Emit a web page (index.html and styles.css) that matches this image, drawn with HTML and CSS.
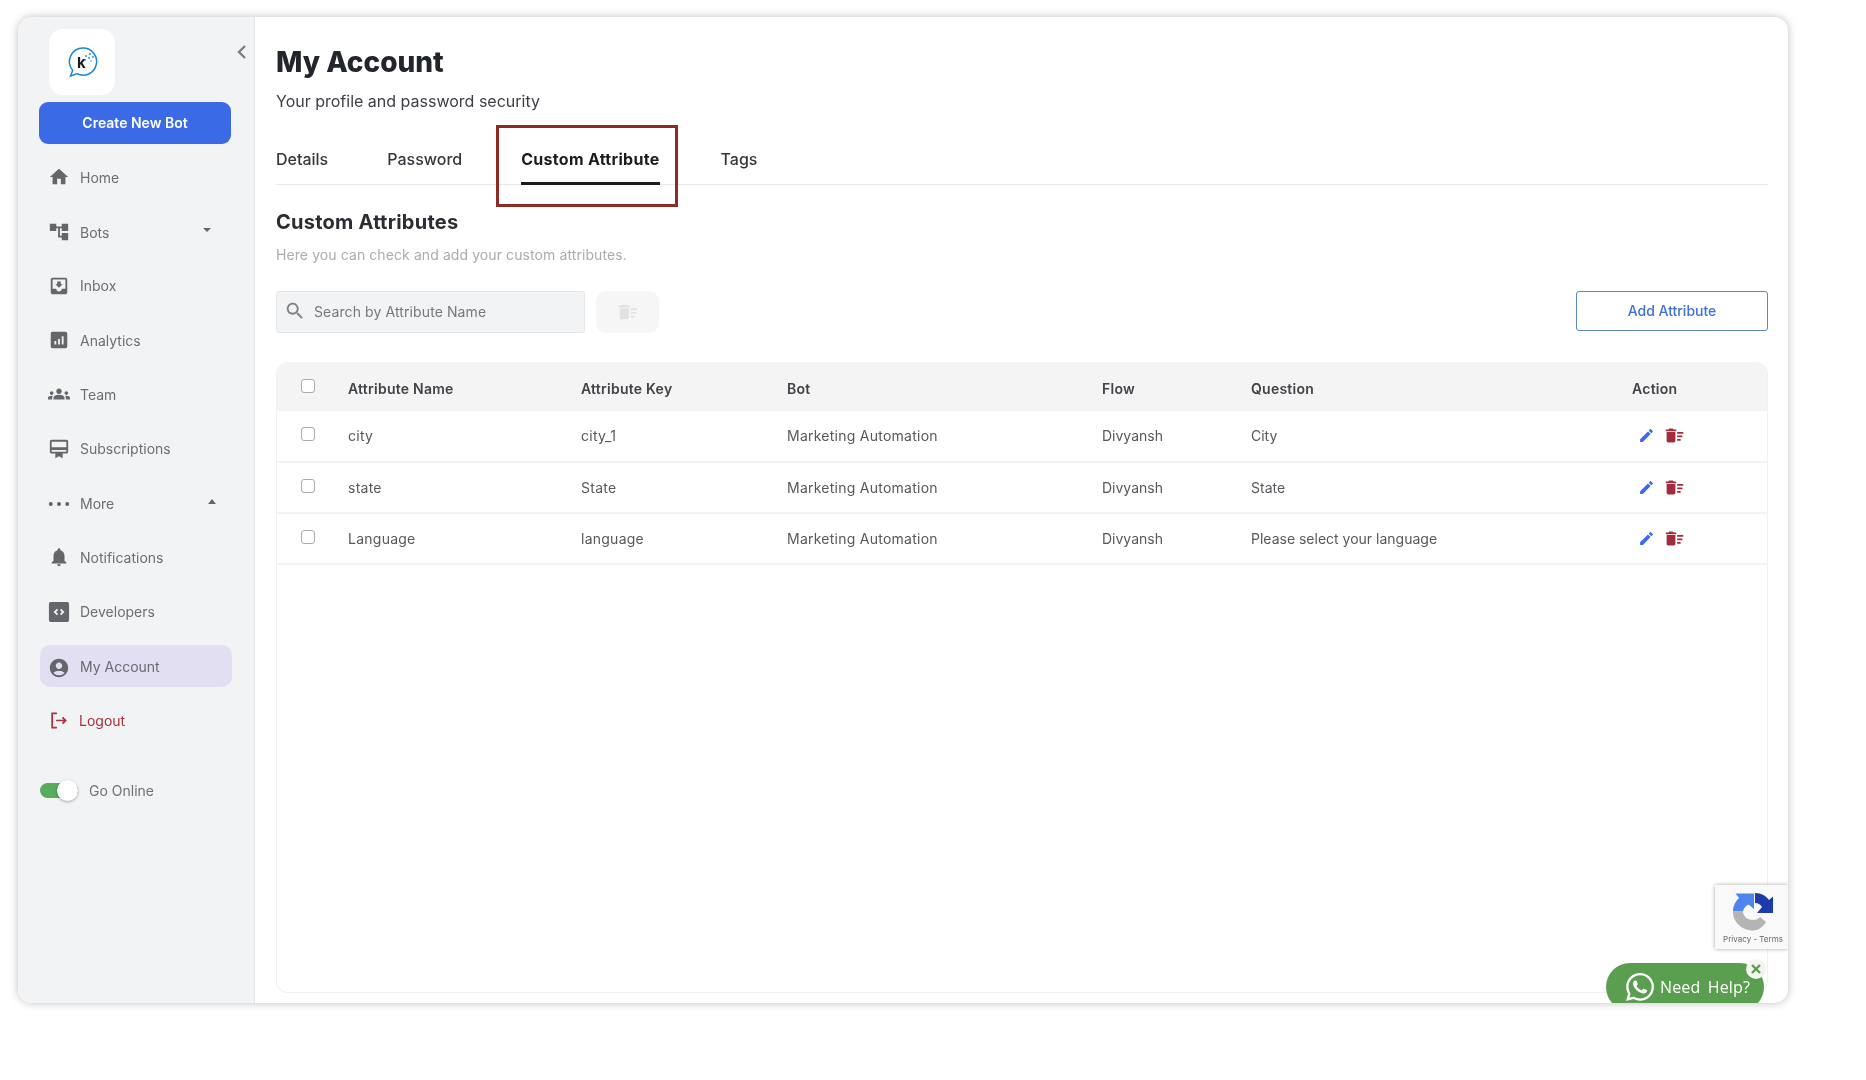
FILE: index.html
```html
<!DOCTYPE html>
<html lang="en">
<head>
<meta charset="utf-8">
<title>My Account</title>
<link rel="stylesheet" href="styles.css">
</head>
<body>
<div class="app">
  <aside class="sidebar">
    <div class="logo">
      <svg width="34" height="34" viewBox="0 0 34 34"><path d="M17 3a13.600 13.600 0 1 1-6.200 25.700L4.500 31l2.200-5.600A13.600 13.600 0 0 1 17 3z" fill="none" stroke="#1b87d6" stroke-width="1.500"/><text x="11" y="23" class="logo-k">k</text><g fill="#1b87d6"><circle cx="20" cy="11" r=".9"/><circle cx="24" cy="9" r=".9"/><circle cx="27" cy="12" r=".9"/><circle cx="23" cy="13" r=".9"/><circle cx="19" cy="15" r=".9"/><circle cx="25" cy="16" r=".7"/></g></svg>
    </div>
    <button class="create">Create New Bot</button>
    <nav class="menu">
      <a class="item"><svg class="ic" viewBox="0 0 24 24"><path d="M10 20v-6h4v6h5v-8h3L12 3 2 12h3v8z"/></svg>Home</a>
      <a class="item nudge"><svg class="ic" viewBox="0 0 24 24"><path d="M22 11V3h-7v3H9V3H2v8h7V8h2v10h4v3h7v-8h-7v3h-2V8h2v3z"/></svg>Bots<i class="caret down bots"></i></a>
      <a class="item"><svg class="ic" viewBox="0 0 24 24"><path d="M19 3H5c-1.100 0-2 .9-2 2v14c0 1.100.9 2 2 2h14c1.100 0 2-.9 2-2V5c0-1.100-.9-2-2-2zm0 12h-4c0 1.660-1.340 3-3 3s-3-1.340-3-3H5V5h14v10zm-3-5h-2V7h-4v3H8l4 4 4-4z"/></svg>Inbox</a>
      <a class="item"><svg class="ic" viewBox="0 0 24 24"><path d="M19 3H5c-1.100 0-2 .9-2 2v14c0 1.100.9 2 2 2h14c1.100 0 2-.9 2-2V5c0-1.100-.9-2-2-2zM9 17H7v-4h2v4zm4 0h-2v-6h2v6zm4 0h-2V8h2v9z"/></svg>Analytics</a>
      <a class="item"><svg class="ic" viewBox="0 0 24 24"><path d="M12 12.750c1.630 0 3.070.39 4.240.9 1.080.48 1.760 1.560 1.760 2.730V18H6v-1.610c0-1.180.68-2.260 1.760-2.730 1.170-.52 2.610-.91 4.240-.91zM4 13c1.100 0 2-.9 2-2s-.9-2-2-2-2 .9-2 2 .9 2 2 2zm1.130 1.100c-.37-.06-.74-.1-1.130-.1-.99 0-1.930.21-2.780.58C.48 14.900 0 15.620 0 16.430V18h4.500v-1.610c0-.83.23-1.610.63-2.290zM20 13c1.100 0 2-.9 2-2s-.9-2-2-2-2 .9-2 2 .9 2 2 2zm4 3.430c0-.81-.48-1.530-1.220-1.850-.85-.37-1.790-.58-2.780-.58-.39 0-.76.04-1.130.1.4.68.63 1.460.63 2.290V18H24v-1.570zM12 6c1.660 0 3 1.340 3 3s-1.340 3-3 3-3-1.340-3-3 1.340-3 3-3z"/></svg>Team</a>
      <a class="item"><svg class="ic" viewBox="0 0 24 24"><path d="M20 2H4c-1.110 0-2 .89-2 2v11c0 1.110.89 2 2 2h4v5l4-2 4 2v-5h4c1.110 0 2-.89 2-2V4c0-1.110-.89-2-2-2zm0 13H4v-2h16v2zm0-5H4V4h16v6z"/></svg>Subscriptions</a>
      <a class="item nudge"><svg class="ic" viewBox="0 0 24 24"><circle cx="3" cy="12" r="2.200"/><circle cx="12" cy="12" r="2.200"/><circle cx="21" cy="12" r="2.200"/></svg>More<i class="caret up"></i></a>
      <a class="item"><svg class="ic" viewBox="0 0 24 24"><path d="M12 22c1.100 0 2-.9 2-2h-4c0 1.100.89 2 2 2zm6-6v-5c0-3.070-1.640-5.640-4.500-6.320V4c0-.83-.67-1.500-1.500-1.500s-1.500.67-1.500 1.500v.68C7.630 5.360 6 7.920 6 11v5l-2 2v1h16v-1l-2-2z"/></svg>Notifications</a>
      <a class="item"><svg class="ic" viewBox="0 0 24 24"><path d="M3 1h18a2 2 0 0 1 2 2v18a2 2 0 0 1-2 2H3a2 2 0 0 1-2-2V3a2 2 0 0 1 2-2zm6.600 7.400L6 12l3.600 3.600 1.400-1.400L8.800 12 11 9.800 9.600 8.400zm4.800 0L13 9.800l2.200 2.200-2.200 2.200 1.400 1.400L18 12l-3.600-3.600z" fill-rule="evenodd"/></svg>Developers</a>
      <a class="item active"><svg class="ic acc" viewBox="0 0 24 24"><path d="M12 2C6.480 2 2 6.480 2 12s4.480 10 10 10 10-4.480 10-10S17.520 2 12 2zm0 4c1.930 0 3.500 1.570 3.500 3.500S13.930 13 12 13s-3.500-1.570-3.500-3.500S10.070 6 12 6zm0 14c-2.030 0-4.430-.82-6.140-2.880C7.550 15.800 9.680 15 12 15s4.450.8 6.140 2.120C16.430 19.180 14.030 20 12 20z"/></svg>My Account</a>
      <a class="item logout"><svg class="ic" viewBox="0 0 24 24"><path d="M10 3H4v18h6M9 12h12M17 8l4 4-4 4" fill="none" stroke="#a5323f" stroke-width="2.200"/></svg>Logout</a>
    </nav>
    <div class="online"><span class="toggle"><span class="knob"></span></span>Go Online</div>
  </aside>
  <button class="collapse" aria-label="Collapse"><svg width="10" height="16" viewBox="0 0 10 16"><path d="M8 2 2 8l6 6" fill="none" stroke="#7a7f85" stroke-width="2.400"/></svg></button>
  <main class="main">
    <h1 class="title">My Account</h1>
    <p class="sub">Your profile and password security</p>
    <div class="tabs">
      <a class="tab">Details</a>
      <a class="tab">Password</a>
      <a class="tab on">Custom Attribute</a>
      <a class="tab">Tags</a>
      <span class="highlight"></span>
    </div>
    <h2 class="heading">Custom Attributes</h2>
    <p class="desc">Here you can check and add your custom attributes.</p>
    <div class="toolbar">
      <div class="search"><svg width="22" height="22" viewBox="0 0 24 24"><path fill="#7d8186" d="M15.500 14h-.79l-.28-.27C15.410 12.590 16 11.110 16 9.500 16 5.910 13.090 3 9.500 3S3 5.910 3 9.500 5.910 16 9.500 16c1.610 0 3.090-.59 4.230-1.570l.27.28v.79l5 4.990L20.490 19l-4.990-5zm-6 0C7.010 14 5 11.990 5 9.500S7.010 5 9.500 5 14 7.010 14 9.500 11.990 14 9.500 14z"/></svg><span>Search by Attribute Name</span></div>
      <button class="bulk" aria-label="Delete selected"><svg width="22" height="22" viewBox="0 0 24 24"><path fill="#e2e2e2" d="M15 16h4v2h-4zm0-8h7v2h-7zm0 4h6v2h-6zM3 18c0 1.100.9 2 2 2h6c1.100 0 2-.9 2-2V8H3v10zM14 5h-3l-1-1H6L5 5H2v2h12z"/></svg></button>
      <button class="add">Add Attribute</button>
    </div>
    <div class="tablewrap">
      <table class="grid">
        <colgroup><col class="c1"><col class="c2"><col class="c3"><col class="c4"><col class="c5"><col class="c6"><col class="c7"></colgroup>
        <thead>
          <tr><th class="chk"><span class="box"></span></th><th>Attribute Name</th><th>Attribute Key</th><th>Bot</th><th>Flow</th><th>Question</th><th>Action</th></tr>
        </thead>
        <tbody>
          <tr><td class="chk"><span class="box"></span></td><td>city</td><td>city_1</td><td>Marketing Automation</td><td>Divyansh</td><td>City</td>
            <td class="acts"><svg class="edit" viewBox="0 0 24 24"><path d="M3 17.250V21h3.750L17.810 9.940l-3.750-3.750L3 17.250zM20.710 7.040c.39-.39.39-1.020 0-1.410l-2.340-2.340c-.39-.39-1.020-.39-1.410 0l-1.830 1.830 3.750 3.750 1.830-1.830z"/></svg><svg class="del" viewBox="0 0 24 24"><path d="M15 16h4v2h-4zm0-8h7v2h-7zm0 4h6v2h-6zM3 18c0 1.100.9 2 2 2h6c1.100 0 2-.9 2-2V8H3v10zM14 5h-3l-1-1H6L5 5H2v2h12z"/></svg></td></tr>
          <tr><td class="chk"><span class="box"></span></td><td>state</td><td>State</td><td>Marketing Automation</td><td>Divyansh</td><td>State</td>
            <td class="acts"><svg class="edit" viewBox="0 0 24 24"><path d="M3 17.250V21h3.750L17.810 9.940l-3.750-3.750L3 17.250zM20.710 7.040c.39-.39.39-1.020 0-1.410l-2.340-2.340c-.39-.39-1.020-.39-1.410 0l-1.830 1.830 3.750 3.750 1.830-1.830z"/></svg><svg class="del" viewBox="0 0 24 24"><path d="M15 16h4v2h-4zm0-8h7v2h-7zm0 4h6v2h-6zM3 18c0 1.100.9 2 2 2h6c1.100 0 2-.9 2-2V8H3v10zM14 5h-3l-1-1H6L5 5H2v2h12z"/></svg></td></tr>
          <tr><td class="chk"><span class="box"></span></td><td>Language</td><td>language</td><td>Marketing Automation</td><td>Divyansh</td><td>Please select your language</td>
            <td class="acts"><svg class="edit" viewBox="0 0 24 24"><path d="M3 17.250V21h3.750L17.810 9.940l-3.750-3.750L3 17.250zM20.710 7.040c.39-.39.39-1.020 0-1.410l-2.340-2.340c-.39-.39-1.020-.39-1.410 0l-1.830 1.830 3.750 3.750 1.830-1.830z"/></svg><svg class="del" viewBox="0 0 24 24"><path d="M15 16h4v2h-4zm0-8h7v2h-7zm0 4h6v2h-6zM3 18c0 1.100.9 2 2 2h6c1.100 0 2-.9 2-2V8H3v10zM14 5h-3l-1-1H6L5 5H2v2h12z"/></svg></td></tr>
        </tbody>
      </table>
    </div>
  </main>
  <div class="recaptcha">
    <svg width="40" height="39" viewBox="0 0 40 39"><path fill="#b4b4b4" d="M0 20h10c.5 5 5 8 10 8 3 0 5.500-1.200 7-3l6 5c-3.500 5.500-8 8.500-13 8.500C9 38.500 0 30 0 20z"/><path fill="#4c86ee" d="M0 19.500C0 14 2.500 9.500 6 6L2.500 1.500H21V17l-5.500-4.500c-3 1.500-5 4-5.500 7z"/><path fill="#1c3aa9" d="M22 1c6.500 0 11 3 14 7l4-3.500V21H24l5-6c-1.500-2.500-4-4-7-4z"/></svg>
    <span>Privacy - Terms</span>
  </div>
  <div class="help">
    <svg width="28" height="28" viewBox="0 0 24 24"><path fill="#fff" d="M17.472 14.382c-.297-.149-1.758-.867-2.030-.967-.273-.099-.471-.148-.67.150-.197.297-.767.966-.94 1.164-.173.199-.347.223-.644.075-.297-.15-1.255-.463-2.390-1.475-.883-.788-1.480-1.761-1.653-2.059-.173-.297-.018-.458.130-.606.134-.133.298-.347.446-.52.149-.174.198-.298.298-.497.099-.198.050-.371-.025-.52-.075-.149-.669-1.612-.916-2.207-.242-.579-.487-.5-.669-.51-.173-.008-.371-.01-.57-.01-.198 0-.52.074-.792.372-.272.297-1.040 1.016-1.040 2.479 0 1.462 1.065 2.875 1.213 3.074.149.198 2.096 3.200 5.077 4.487.709.306 1.262.489 1.694.625.712.227 1.360.195 1.871.118.571-.085 1.758-.719 2.006-1.413.248-.694.248-1.289.173-1.413-.074-.124-.272-.198-.57-.347m-5.421 7.403h-.004a9.870 9.870 0 0 1-5.031-1.378l-.361-.214-3.741.982.998-3.648-.235-.374a9.860 9.860 0 0 1-1.510-5.260c.001-5.450 4.436-9.884 9.888-9.884 2.640 0 5.122 1.030 6.988 2.898a9.825 9.825 0 0 1 2.893 6.994c-.003 5.450-4.437 9.884-9.885 9.884m8.413-18.297A11.815 11.815 0 0 0 12.050 0C5.495 0 .16 5.335.157 11.892c0 2.096.547 4.142 1.588 5.945L.057 24l6.305-1.654a11.882 11.882 0 0 0 5.683 1.448h.005c6.554 0 11.890-5.335 11.893-11.893a11.821 11.821 0 0 0-3.480-8.413z"/></svg>
    <span>Need Help?</span>
    <span class="close"><svg width="12" height="12" viewBox="0 0 12 12"><path d="M2 2l8 8M10 2l-8 8" stroke="#5a9e4f" stroke-width="2.400"/></svg></span>
  </div>
</div>
</body>
</html>
```
FILE: styles.css
```css
* { box-sizing: border-box; }
html, body { margin: 0; background: #fff; }
body { padding: 17px 0 0 18px; height: 1080px; overflow: hidden; font-family: Inter, "Noto Sans", sans-serif; filter: blur(.5px); }
.app { position: relative; width: 1770px; height: 986px; display: flex; background: #fff; border-radius: 14px; overflow: hidden; box-shadow: 0 0 8px rgba(0,0,0,.25); }

.sidebar { width: 237px; flex: none; background: #f2f3f5; border-right: 1px solid #e3e4e6; padding: 12px 0 0 21px; display: flex; flex-direction: column; }
.logo { width: 66px; height: 66px; margin-left: 10px; background: #fff; border-radius: 14px; display: flex; align-items: center; justify-content: center; padding-left: 2px; }
.logo-k { font: 700 15px Inter, sans-serif; fill: #1c1c1c; }
.create { width: 192px; height: 42px; margin-top: 7px; padding-bottom: 2px; border: 0; border-radius: 9px; background: #3a6ae6; color: #fff; font: 600 14px Inter, sans-serif; }
.menu { margin-top: 6px; display: flex; flex-direction: column; }
.item { height: 54.3px; width: 192px; display: flex; align-items: center; padding-left: 9px; font-size: 14px; color: #6b6e73; }
.item.nudge { padding-top: 2px; }
.ic { width: 22px; height: 22px; fill: #63666a; margin-right: 10px; flex: none; }
.item .acc { margin-top: 3px; }
.item.active { background: #e3dff3; height: 42px; width: 192px; margin: 6px 0 6.3px 1px; padding: 1px 0 0 8px; border-radius: 10px; color: #696a72; }
.item.logout { color: #a5323f; padding-left: 10px; }
.item.logout .ic { width: 19px; height: 19px; margin-right: 11px; fill: none; }
.caret { width: 0; height: 0; margin-left: auto; margin-bottom: 4px; border-left: 4px solid transparent; border-right: 4px solid transparent; }
.caret.down { border-top: 4px solid #63666a; }
.caret.bots { margin-right: 20px; }
.caret.up { border-bottom: 5px solid #63666a; margin-right: 15px; }
.online { display: flex; align-items: center; margin-top: 35px; font-size: 14px; color: #6f7276; }
.toggle { width: 38px; height: 15px; margin: 0 11px 0 1px; border-radius: 8px; background: #56ad5b; display: flex; justify-content: flex-end; align-items: center; }
.knob { width: 21px; height: 21px; border-radius: 50%; background: #fff; box-shadow: 0 1px 3px rgba(0,0,0,.3); }
.collapse { position: absolute; left: 219px; top: 27px; padding: 0; border: 0; background: none; display: flex; }

.main { flex: 1; min-width: 0; padding: 28px 20px 10px 21px; display: flex; flex-direction: column; }
.title { margin: 0; font-size: 28px; line-height: 34px; font-weight: 800; color: #22252b; }
.sub { margin: 11px 0 0; font-size: 16px; line-height: 22px; color: #3c3f45; }
.tabs { position: relative; display: flex; gap: 59px; margin-top: 21px; height: 52px; border-bottom: 1px solid #e8e8e8; }
.tab { font-size: 16px; line-height: 22px; padding-top: 15px; color: #34373c; font-weight: 500; }
.tab.on { font-weight: 700; color: #1a1c20; border-bottom: 3px solid #1a1c20; height: 52px; letter-spacing: .3px; margin-right: 2px; }
.highlight { position: absolute; left: 220px; top: -8px; width: 182px; height: 82px; border: 3px solid #8c2c24; }
.heading { margin: 24px 0 0; font-size: 20px; line-height: 26px; font-weight: 700; letter-spacing: .25px; color: #2a2d32; }
.desc { margin: 10px 0 0; font-size: 14px; line-height: 20px; letter-spacing: .09px; color: #aaadb0; }
.toolbar { margin-top: 26px; display: flex; align-items: flex-start; }
.search { width: 309px; height: 42px; padding: 0 0 2px 7px; background: #f2f3f5; border: 1px solid #e4e5e7; border-radius: 3px; display: flex; align-items: center; gap: 8px; font-size: 14px; letter-spacing: .1px; color: #75787c; }
.bulk { width: 63px; height: 42px; margin-left: 11px; border: 0; border-radius: 10px; background: #f6f6f6; display: flex; align-items: center; justify-content: center; }
.add { width: 192px; height: 40px; margin-left: auto; padding-bottom: 3px; background: #fff; border: 1.5px solid #5b86c9; border-radius: 3px; color: #3f6fd8; font: 500 14px Inter, sans-serif; }

.tablewrap { flex: 1; margin-top: 29px; border: 1px solid #f1f1f1; border-top: 0; border-radius: 12px; overflow: hidden; }
.grid { width: 100%; table-layout: fixed; border-collapse: collapse; font-size: 14px; color: #55585c; }
.c1 { width: 71px; } .c2 { width: 233px; } .c3 { width: 206px; } .c4 { width: 315px; } .c5 { width: 149px; } .c6 { width: 381px; }
.grid th { height: 49px; padding: 3px 0 0; background: #f4f4f4; text-align: left; font-weight: 600; letter-spacing: .25px; color: #404347; }
.grid td { height: 51px; padding: 0 0 1px; border-bottom: 2px solid #f3f3f3; }
.grid td:nth-child(2), .grid td:nth-child(3), .grid td:nth-child(4) { letter-spacing: .25px; }
.grid .chk { padding-left: 24px; }
.box { display: block; width: 14px; height: 14px; border: 1.5px solid #a9abad; border-radius: 3px; background: #fff; margin-bottom: 3px; }
.grid th .box { margin-bottom: 4px; }
.acts { padding-left: 6px !important; }
.acts svg { vertical-align: middle; }
.edit { width: 17px; height: 17px; fill: #3a6ae6; }
.del { width: 21px; height: 21px; fill: #a32c3b; margin-left: 9px; }

.recaptcha { position: absolute; right: 0; top: 868px; width: 73px; height: 64px; background: #f9f9f9; box-shadow: 0 0 4px rgba(0,0,0,.35); display: flex; flex-direction: column; align-items: center; padding: 7px 0 0 3px; font: 8px Inter, sans-serif; color: #666; }
.recaptcha svg { flex: none; }
.recaptcha span { margin-top: 3px; white-space: nowrap; }
.help { position: absolute; left: 1588px; top: 946px; width: 158px; height: 48px; background: #5a9e4f; border-radius: 24px; display: flex; align-items: flex-start; padding: 10px 0 0 20px; gap: 6px; color: #fff; font: 16px/28px "Open Sans", sans-serif; word-spacing: 3px; letter-spacing: .15px; }
.close { position: absolute; right: -2px; top: -4px; width: 20px; height: 20px; border-radius: 50%; background: #f3f5f2; display: flex; align-items: center; justify-content: center; }
```
